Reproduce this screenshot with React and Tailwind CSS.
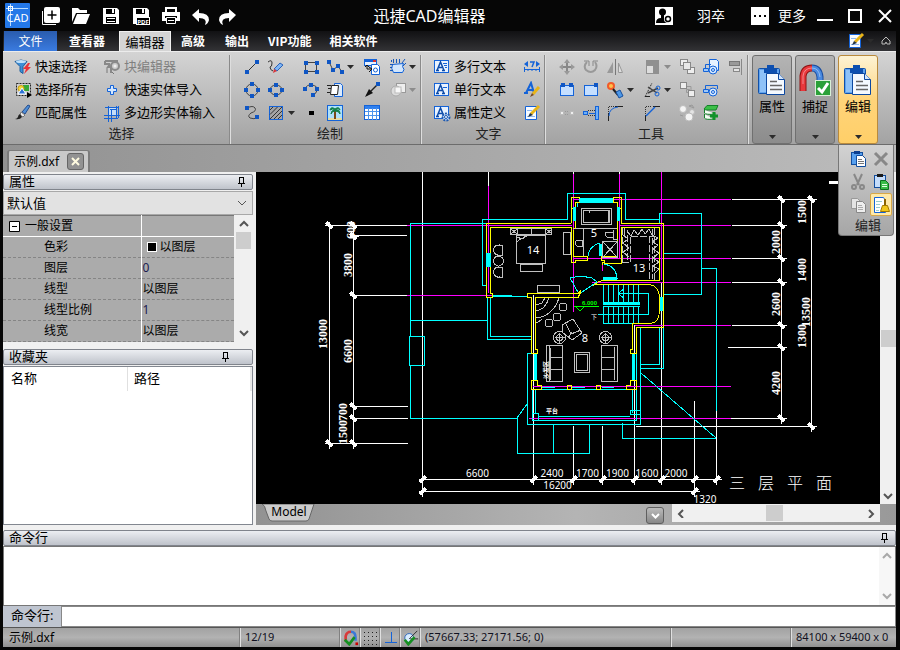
import React from "react";

const BLUE = "#1463d8";
const GRAY = "#c0c0c0";

function Icon({ size = 18, box = 18, children }) {
  return (
    <svg width={size} height={size} viewBox={`0 0 ${box} ${box}`} fill="none" className="shrink-0" aria-hidden="true">
      {children}
    </svg>
  );
}

function Dots({ at, r = 2, color = "#0f56c4" }) {
  return at.map(([x, y]) => (
    <rect key={`${x}-${y}`} x={x - r} y={y - r} width={r * 2} height={r * 2} fill={color} />
  ));
}

function LetterSheet({ children }) {
  return (
    <Icon>
      <rect x="1.500" y="2.500" width="14" height="12" fill="#e8f2ff" stroke={BLUE} />
      <path d="M4 12.500 7.500 4 11 12.500M5 9.500h4M3 12.500h3M9 12.500h3" stroke="#0b4aa8" strokeWidth="1.500" />
      {children}
    </Icon>
  );
}

const icons = {
  funnel: (
    <Icon>
      <path d="M1 3.500q6-3 12 0l-4 5v7l-3-2V8.500z" fill="#3c8fd8" stroke="#1c5c9c" />
      <ellipse cx="7" cy="3.500" rx="5" ry="1.500" fill="#bfe0fa" />
      <path d="m14 5-5 6h3l-2 5 7-7h-3l2-4z" fill="#e8333a" />
    </Icon>
  ),
  selectAll: (
    <Icon>
      <rect x="2.500" y="2.500" width="14" height="12" fill="#cfcfcf" stroke="#222" strokeDasharray="2 1" />
      <rect x="9" y="4" width="6" height="6" fill="#38a838" />
      <circle cx="7" cy="7.500" r="3" fill="#f4d83a" stroke="#c89c10" />
      <path d="m4 13 4-6 4 6z" fill="#2c72d8" stroke="#fff" />
      <path d="M13 11v6l5-3z" fill="#000" />
    </Icon>
  ),
  brush: (
    <Icon>
      <path d="m8 8 6-7 2 1-5 8z" fill="#4f8fd8" stroke="#234b8c" />
      <path d="m7 8 4 3-2 2-3-2z" fill="#eee" stroke="#777" />
      <path d="M6 10q-2 1-2 3-1 2-3 2 5 1 7-2z" fill="#222" />
    </Icon>
  ),
  blockEditor: (
    <Icon>
      <path d="M2 3h12v3M2 3v3h5M7 6 5 9h3v6" stroke="#888" strokeWidth="2" />
      <circle cx="12" cy="8" r="4" fill="#ccc" stroke="#8a8a8a" strokeWidth="2" />
      <circle cx="12" cy="8" r="1.500" fill="#eee" />
      <path d="M4 10v5M9 14l2 2" stroke="#777" />
    </Icon>
  ),
  plus: (
    <Icon>
      <path d="M7.500 4.500h3v3h3v3h-3v3h-3v-3h-3v-3h3z" fill="#d4e8ff" stroke={BLUE} />
    </Icon>
  ),
  polygonInput: (
    <Icon>
      <rect x="5.500" y="3.500" width="8" height="8" fill="#c4ddf8" />
      <path d="M2 3.500h14M5.500 2v16M13.500 2v13M1 11.500h16M8.500 5v13M15.500 2v12M1 14.500h14M7 5.500h7" stroke={BLUE} />
    </Icon>
  ),
  line: (
    <Icon>
      <path d="M4 14 14 4" stroke="#333" />
      <Dots at={[[4, 14], [14, 4]]} />
    </Icon>
  ),
  freehand: (
    <Icon>
      <path d="M1 4q4-3 4 1t-2 4q0 3 3 4" stroke="#333" />
      <path d="m7 11 6-6 3 2-6 6z" fill="#7db4f4" stroke="#2b62b8" />
      <path d="m7 11-1 4 4-2z" fill="#d8353a" />
    </Icon>
  ),
  rect: (
    <Icon>
      <rect x="3.500" y="4.500" width="11" height="9" stroke="#444" />
      <Dots at={[[4, 5], [15, 5], [4, 14], [15, 14]]} />
    </Icon>
  ),
  polyline: (
    <Icon>
      <path d="m3 4 4 8 5-4 4 6" stroke="#444" />
      <Dots at={[[3, 4], [7, 12], [12, 8], [16, 14]]} />
    </Icon>
  ),
  blockInsert: (
    <Icon>
      <rect x="1.500" y="1.500" width="12" height="6" fill="#e7f1ff" stroke={BLUE} />
      <path d="M2 3h8" stroke={BLUE} strokeWidth="2" />
      <path d="M10 3h3" stroke="#d83030" strokeWidth="2" />
      <path d="M8.500 6.500h6l2 2v8h-8z" fill="#fff" stroke={BLUE} />
      <circle cx="12.500" cy="12" r="2" stroke={BLUE} />
      <path d="M4 7v4h5M6 9l3 2-3 3M2 9l2-2 2 2" stroke="#111" />
    </Icon>
  ),
  region: (
    <Icon>
      <path d="M3.500 6.500q-2 4 1 8h9q3-3 0-6l1-3z" fill="#d2e6fc" stroke={BLUE} />
      <path d="M4.500 1v4M7.500 1v4M10.500 1v4M13 5l3-4M14 8l3-3M1 6.500h3M1 9.500h2M1 12.500h3M2.500 2v2" stroke="#1658b8" />
    </Icon>
  ),
  circle: (
    <Icon>
      <circle cx="9" cy="9" r="6" stroke="#444" />
      <Dots at={[[9, 3], [15, 9], [9, 15], [3, 9]]} />
    </Icon>
  ),
  ellipse: (
    <Icon>
      <ellipse cx="9" cy="9" rx="6" ry="5" stroke="#444" />
      <Dots at={[[9, 4], [15, 9], [9, 14], [3, 9]]} />
    </Icon>
  ),
  arc: (
    <Icon>
      <path d="M3 8q2-5 7-4 6 1 5 5 0 3-4 5" stroke="#444" />
      <Dots at={[[3, 8], [9, 4], [15, 8], [11, 14]]} />
    </Icon>
  ),
  xref: (
    <Icon>
      <path d="M8.500 2.500h6l2 2v11h-8z" fill="#dcebfc" stroke={BLUE} />
      <path d="M5.500 4.500h7l-1 9h-7z" fill="#fff" stroke="#222" />
      <path d="M1 4.500h4M2 7.500h3M1 11.500h3" stroke="#222" />
    </Icon>
  ),
  leader: (
    <Icon>
      <path d="m4 14 11-11" stroke="#222" strokeWidth="1.500" />
      <path d="m2 16 4-8 4 4z" fill="#111" />
      <Dots at={[[15, 3]]} />
    </Icon>
  ),
  wipeout: (
    <Icon>
      <rect x="7.500" y="2.500" width="9" height="9" fill="#eee" stroke="#999" />
      <circle cx="7" cy="10" r="5" fill="#ddd" stroke="#aaa" />
      <rect x="6" y="6" width="6" height="6" fill="#f8f8f8" stroke="#bbb" />
    </Icon>
  ),
  spline: (
    <Icon>
      <path d="M4 4q6-3 8 0t-4 5q-4 3-1 5 4 2 8-1" stroke="#444" />
      <Dots at={[[4, 4], [14, 13]]} />
    </Icon>
  ),
  hatch: (
    <Icon>
      <rect x="2.500" y="2.500" width="13" height="13" fill="#a4a4a4" stroke={BLUE} />
      <path d="m3 6 3-3M3 10.500 10.500 3M3 15 15 3M7 15l8-8M11 15l4-4" stroke="#333" />
    </Icon>
  ),
  point: (
    <Icon>
      <rect x="7" y="7" width="5" height="4" fill="#000" />
    </Icon>
  ),
  image: (
    <Icon>
      <rect x="1.500" y="1.500" width="15" height="15" fill="#aee0fa" stroke={BLUE} />
      <path d="M2 14h14v2H2z" fill="#e8dca0" />
      <path d="M9 6v9" stroke="#7a4a18" strokeWidth="2" />
      <path d="M9 6q-4 0-4 4 1-3 4-3 4 0 5 3 0-5-5-4 3-3 5 0-1-4-5-1-4-3-5 1 3-2 5 0z" fill="#128048" stroke="#128048" />
    </Icon>
  ),
  table: (
    <Icon>
      <rect x="1.500" y="1.500" width="15" height="14" fill="#fff" stroke={BLUE} />
      <path d="M2 3.500h14" stroke="#3080ee" strokeWidth="3" />
      <path d="M2 7.500h14M2 11.500h14M5.500 4v12M9.500 4v12M13.500 4v12" stroke="#4c94ec" />
    </Icon>
  ),
  mtext: (
    <LetterSheet>
      <path d="M10 5.500h4M11 7.500h3M12 9.500h2" stroke={BLUE} />
    </LetterSheet>
  ),
  stext: (
    <LetterSheet>
      <path d="M10 6.500h4" stroke={BLUE} />
    </LetterSheet>
  ),
  attdef: (
    <LetterSheet>
      <circle cx="13" cy="13" r="3.500" fill="#cfe4fc" stroke="#1c58b0" strokeWidth="2" strokeDasharray="2 1" />
      <circle cx="13" cy="13" r="1.500" fill="#fff" stroke="#1c58b0" />
    </LetterSheet>
  ),
  dimension: (
    <Icon>
      <path d="M1 11.500h16M1.500 9v5M16.500 9v5M5 11v2M9 11v2M13 11v2" stroke={BLUE} />
      <path d="m1 6 4-3v6zM17 6l-4-3v6z" fill={BLUE} />
      <path d="M7 4h4L9 9" stroke={BLUE} strokeWidth="1.500" />
    </Icon>
  ),
  textStyle: (
    <Icon>
      <path d="m3 12 5-10 3 10M5 9h5M1 12h4" stroke={BLUE} strokeWidth="2" />
      <path d="m10 13 6-7" stroke="#e8b418" strokeWidth="3" />
      <path d="m7 16 2-4 2 2z" fill="#7b4a1c" />
    </Icon>
  ),
  sheetEdit: (
    <Icon>
      <path d="M2.500 2.500h11v13h-11z" fill="#f7fbff" stroke={BLUE} />
      <path d="M4 6.500h5M4 12.500h8" stroke="#8eb8f0" />
      <path d="m8 10 8-8" stroke="#e8b418" strokeWidth="3" />
      <path d="m5 13 2-4 3 2z" fill="#234" />
    </Icon>
  ),
  move: (
    <Icon>
      <path d="M9 3v12M3 9h12" stroke="#888" strokeWidth="2" />
      <path d="m9 1 3 4H6zM9 17l3-4H6zM1 9l4-3v6zM17 9l-4-3v6z" fill="#999" />
    </Icon>
  ),
  rotate: (
    <Icon>
      <path d="M5 4q-4 4-1 8 5 4 9 0 3-4 0-8" stroke="#999" strokeWidth="2" />
      <path d="M2 3h5v5M11 8V3h5" stroke="#888" />
    </Icon>
  ),
  mirror: (
    <Icon>
      <path d="M9.500 1v16" stroke="#777" />
      <path d="M7 4v11H1z" fill="#999" />
      <path d="M12.500 5v9.500h4z" fill="#ddd" stroke="#999" />
    </Icon>
  ),
  scale: (
    <Icon>
      <rect x="3" y="2" width="13" height="14" fill="#909090" />
      <rect x="3" y="7" width="8" height="9" fill="#ddd" />
      <rect x="3.500" y="7.500" width="7" height="8" stroke="#444" strokeDasharray="1 1" />
    </Icon>
  ),
  orderFront: (
    <Icon>
      <rect x="2.500" y="1.500" width="7" height="6" fill="#eee" stroke="#888" />
      <rect x="9.500" y="9.500" width="7" height="6" fill="#eee" stroke="#888" />
      <rect x="5.500" y="4.500" width="7" height="7" fill="#e8e8e8" stroke="#888" />
    </Icon>
  ),
  blockA: (
    <Icon>
      <path d="M7.500 1.500h7l2 2v9h-9z" fill="#e5f1ff" stroke={BLUE} />
      <path d="M3.500 10V6.500H9" stroke={BLUE} />
      <path d="M1.500 10.500h5v3h-5z" stroke={BLUE} fill="#9dc8fa" />
      <circle cx="11" cy="12" r="4" fill="#d6e9ff" stroke={BLUE} />
      <circle cx="11" cy="12" r="1.500" stroke={BLUE} />
    </Icon>
  ),
  align: (
    <Icon>
      <path d="M15.500 1v16" stroke="#888" />
      <rect x="3.500" y="3.500" width="10" height="4" fill="#999" stroke="#777" />
      <rect x="7.500" y="10.500" width="6" height="3" fill="#e4e4e4" stroke="#888" />
    </Icon>
  ),
  breakA: (
    <Icon>
      <rect x="2.500" y="4.500" width="13" height="10" fill="#c5dfff" stroke={BLUE} />
      <Dots at={[[5, 4], [13, 4]]} />
    </Icon>
  ),
  breakB: (
    <Icon>
      <rect x="2.500" y="4.500" width="13" height="10" fill="#c5dfff" stroke={BLUE} />
      <Dots at={[[14, 4]]} />
    </Icon>
  ),
  explode: (
    <Icon>
      <circle cx="5" cy="5" r="4" fill="#f25a28" />
      <circle cx="5" cy="5" r="2" fill="#ffc04a" />
      <path d="m7 8 5 6" stroke="#222" strokeWidth="2" />
      <path d="m10 11 4-2 3 6-4 2z" fill="#4d98e8" stroke="#174f9e" />
    </Icon>
  ),
  trim: (
    <Icon>
      <path d="m2 16 7-14" stroke="#333" strokeDasharray="2 1" />
      <path d="m5 6 9 6M5 12l10-5" stroke="#444" strokeWidth="1.500" />
      <circle cx="15" cy="7" r="2" stroke={BLUE} />
      <circle cx="14" cy="13" r="2" stroke={BLUE} />
      <path d="M2 15.500h5" stroke="#222" />
    </Icon>
  ),
  orderBack: (
    <Icon>
      <path d="M8.500 8.500h3v3h-3zM9 5.500h4V9" stroke="#999" />
      <rect x="2.500" y="1.500" width="6" height="6" fill="#eee" stroke="#888" />
      <rect x="10.500" y="9.500" width="6" height="6" fill="#eee" stroke="#888" />
    </Icon>
  ),
  blockB: (
    <Icon>
      <path d="M3.500 9V4.500h12V8" stroke={BLUE} />
      <path d="M1.500 8.500h5v3h-5z" stroke={BLUE} fill="#9dc8fa" />
      <circle cx="11" cy="11" r="4" fill="#d6e9ff" stroke={BLUE} />
      <circle cx="11" cy="11" r="1.500" stroke={BLUE} />
    </Icon>
  ),
  join: (
    <Icon>
      <rect x="2.500" y="7.500" width="3" height="3" fill="#eee" stroke="#bbb" />
      <rect x="12.500" y="7.500" width="3" height="3" fill="#eee" stroke="#bbb" />
      <path d="M7 7.500h4M7 10.500h4" stroke="#999" strokeDasharray="1 1" />
    </Icon>
  ),
  extend: (
    <Icon>
      <rect x="13.500" y="2.500" width="3" height="13" fill="#6fb0f8" stroke={BLUE} />
      <rect x="1.500" y="7.500" width="4" height="3" fill="#6fb0f8" stroke={BLUE} />
      <path d="M6 6.500h7M6 11.500h7" stroke="#333" strokeDasharray="1 1" />
      <path d="M7 9.500h6" stroke={BLUE} />
    </Icon>
  ),
  fillet: (
    <Icon>
      <path d="M2.500 17V9M9 2.500h8" stroke="#222" />
      <path d="M2.500 8V2.500H8" stroke="#333" strokeDasharray="1 1" />
      <path d="M3 12q0-8 9-9" stroke={BLUE} />
    </Icon>
  ),
  chamfer: (
    <Icon>
      <path d="M2.500 17v-6M10 2.500h7" stroke="#222" />
      <path d="M2.500 10V2.500H9" stroke="#333" strokeDasharray="1 1" />
      <path d="m3 12 9-9" stroke={BLUE} strokeWidth="1.500" />
    </Icon>
  ),
  group: (
    <Icon>
      <circle cx="5" cy="5" r="3.500" fill="#f4f4f4" stroke="#bbb" />
      <circle cx="14" cy="8" r="2.500" fill="#e4e4e4" stroke="#bbb" />
      <circle cx="11" cy="13" r="4" fill="#f4f4f4" stroke="#bbb" />
      <path d="m11 2 3-1 2 3zM2 11l3 1" stroke="#999" />
    </Icon>
  ),
  addLayer: (
    <Icon>
      <path d="M2 5 5 1.500h11L14 6H3z" fill="#3cbf48" stroke="#14802a" />
      <path d="M2.500 6v3q1 2 11 1M2.500 10v4q1 2 9 1" stroke="#14802a" fill="#f4fff4" />
      <path d="M12 8v8M8 12h8" stroke="#12922a" strokeWidth="3" />
    </Icon>
  ),
  paste: (
    <Icon>
      <rect x="2.500" y="2.500" width="11" height="12" fill="#58a0ee" stroke="#124e9e" />
      <rect x="5" y="1" width="6" height="3" fill="#0b3f90" />
      <path d="M7.500 5.500h6l3 3v8h-9z" fill="#fff" stroke="#124e9e" />
      <path d="M9 9.500h4M9 11.500h6M9 13.500h6" stroke="#777" />
    </Icon>
  ),
  remove: (
    <Icon>
      <path d="m3 3 12 12M15 3 3 15" stroke="#888" strokeWidth="3" />
    </Icon>
  ),
  cut: (
    <Icon>
      <path d="m5 1 5 11M13 1 8 12" stroke="#888" strokeWidth="2" />
      <circle cx="5" cy="14" r="2" stroke="#888" strokeWidth="2" />
      <circle cx="13" cy="14" r="2" stroke="#888" strokeWidth="2" />
    </Icon>
  ),
  pasteBlock: (
    <Icon>
      <rect x="2.500" y="2.500" width="11" height="12" fill="#c5ddfb" stroke="#124e9e" />
      <rect x="5" y="1" width="6" height="3" fill="#1a1a1a" />
      <path d="M8.500 7.500h5l3 3v6h-8z" fill="#39bd48" stroke="#0f701f" />
      <path d="M10 11.500h5M10 13.500h5" stroke="#dfffdf" />
    </Icon>
  ),
  copy: (
    <Icon>
      <path d="M2.500 2.500h6l3 3v7h-9z" fill="#e4e4e4" stroke="#999" />
      <path d="M7.500 5.500h6l3 3v8h-9z" fill="#eee" stroke="#888" />
      <path d="M9 9.500h4M9 11.500h5M9 13.500h5" stroke="#aaa" />
    </Icon>
  ),
  clean: (
    <Icon>
      <path d="M2.500 1.500h9l2 3v12h-11z" fill="#fff" stroke={BLUE} />
      <path d="M4 5.500h6M4 8.500h4M4 11.500h4M4 14.500h3" stroke="#9cc" />
      <path d="M13 3v7" stroke="#8c6400" strokeWidth="2" />
      <path d="M10.500 9.500h5l2 6h-9z" fill="#f1c71c" stroke="#a37a00" />
    </Icon>
  ),
};

function Arrow({ muted }) {
  return (
    <svg width="7" height="4" viewBox="0 0 7 4" className="shrink-0" aria-hidden="true">
      <path d="M0 0h7L3.500 4z" fill={muted ? "#8c8c8c" : "#2b2b2b"} />
    </svg>
  );
}

function Tool({ icon, label, arrow, muted }) {
  return (
    <button type="button" aria-label={label} className="flex h-[23px] items-center">
      <span className="flex w-6 justify-center">{icons[icon]}</span>
      {arrow && <Arrow muted={muted} />}
    </button>
  );
}

function TextTool({ icon, label, muted }) {
  return (
    <button type="button" className={`flex h-[23px] items-center gap-[3px] whitespace-nowrap text-[13px] ${muted ? "text-[#808080]" : "text-black"}`}>
      {icons[icon]}
      {label}
    </button>
  );
}

function Group({ title, className, children }) {
  return (
    <section aria-label={title} className={`flex shrink-0 flex-col border-r border-r-[#8a8a8a] shadow-[1px_0_0_#dedede] ${className}`}>
      {children}
      <h2 className="h-5 text-center text-[13px] leading-[18px] text-[#222]">{title}</h2>
    </section>
  );
}

function Clipboard() {
  return (
    <Icon size={32} box={32}>
      <rect x="2.500" y="4.500" width="21" height="25" rx="1" fill="#5fa3ef" stroke="#1150a8" />
      <rect x="4" y="6" width="8" height="22" fill="#8fc2f8" />
      <path d="M8 5h3V1h7v4h3v4H8z" fill="#0d4fb0" />
      <path d="M10.500 9.500h12l6 6v15h-18z" fill="#f4f9ff" stroke="#0d48a0" />
      <path d="M22.500 9.500v6h6" fill="#d4e6fb" stroke="#0d48a0" />
      <path d="M14 17.500h7M14 21.500h12M14 25.500h12" stroke="#666" strokeWidth="1.500" />
    </Icon>
  );
}

function Magnet() {
  return (
    <Icon size={32} box={32}>
      <path d="M4 27V12Q5 4 13 4" stroke="#8d1414" strokeWidth="7" />
      <path d="M4 27V12Q5 4 13 4" stroke="#e8383c" strokeWidth="5" />
      <path d="M13 4q7 0 8 9v8" stroke="#1b4ea0" strokeWidth="7" />
      <path d="M13 4q7 0 8 9v8" stroke="#4a8ae0" strokeWidth="5" />
      <path d="M4 20V12Q5 4 13 4q7 0 8 9" stroke="#fff" strokeOpacity=".4" />
      <rect x="16.500" y="16.500" width="15" height="15" fill="#2aa038" stroke="#d8f0d8" />
      <path d="m19 24 4 4 6-9" stroke="#fff" strokeWidth="3" />
    </Icon>
  );
}

function BigButton({ label, active, children }) {
  return (
    <button
      type="button"
      className={`flex w-10 shrink-0 flex-col items-center rounded-[3px] border pt-2 pb-1 text-[13px] text-black ${
        active ? "border-[#b98a3c] bg-linear-to-b from-[#fdf3d4] via-[#ffd47a] to-[#ffcf68]" : "border-[#707070] bg-linear-to-b from-[#b4b4b4] to-[#8c8c8c]"
      }`}
    >
      {children}
      <span className="leading-5">{label}</span>
      <span className="mt-auto">
        <Arrow />
      </span>
    </button>
  );
}

function Chevron({ dir }) {
  const paths = { up: "m1 6 4-4 4 4", down: "m1 3 4 4 4-4", left: "M7 1 3 5l4 4", right: "m3 1 4 4-4 4" };
  return (
    <svg width="10" height="9" viewBox="0 0 10 9" fill="none" className="shrink-0" aria-hidden="true">
      <path d={paths[dir]} stroke="#555" strokeWidth="2" />
    </svg>
  );
}

function Pin() {
  return (
    <svg width="9" height="10" viewBox="0 0 9 10" fill="none" aria-hidden="true">
      <path d="M2.500 6V.5h4V6M6 1v5M1 6.500h7M4.500 7v3" stroke="#000" shapeRendering="crispEdges" />
    </svg>
  );
}

function PanelHeader({ title, pinClass = "pr-1.5" }) {
  return (
    <div className={`flex h-4 items-center justify-between rounded-[2px] border border-[#80848c] bg-linear-to-b from-[#eceef2] to-[#bfc3cb] pl-[5px] ${pinClass}`}>
      <h2 className="pb-0.5 text-[13px] leading-[14px] text-black">{title}</h2>
      <button type="button" aria-label={`固定${title}`}>
        <Pin />
      </button>
    </div>
  );
}

const drawTools = [
  ["line", "直线"], ["freehand", "徒手画"], ["rect", "矩形"], ["polyline", "多段线", true], ["blockInsert", "插入块"], ["region", "云线", true],
  ["circle", "圆"], ["ellipse", "椭圆"], ["arc", "圆弧"], ["xref", "外部参照"], ["leader", "引线"], ["wipeout", "遮罩", true, true],
  ["spline", "样条"], ["hatch", "填充", true], ["point", "点"], ["image", "图像"], ["table", "表格"],
];

const editTools = [
  ["move", "移动"], ["rotate", "旋转"], ["mirror", "镜像"], ["scale", "缩放", true, true], ["orderFront", "前置"], ["blockA", "创建块"], ["align", "对齐"],
  ["breakA", "打断"], ["breakB", "打断于点"], ["explode", "分解", true], ["trim", "修剪", true], ["orderBack", "后置"], ["blockB", "编辑块"], null,
  ["join", "合并"], ["extend", "延伸"], ["fillet", "圆角"], ["chamfer", "倒角"], ["group", "编组"], ["addLayer", "添加图层"],
];

function Toolset({ items, className }) {
  return (
    <div className={`grid ${className}`}>
      {items.map((t, i) => (t ? <Tool key={t[0]} icon={t[0]} label={t[1]} arrow={t[2]} muted={t[3]} /> : <span key={i} />))}
    </div>
  );
}

function TitleBar() {
  return (
    <header className="flex h-[31px] items-center text-white">
      <svg width="25" height="25" viewBox="0 0 25 25" className="mr-3 ml-[5px] shrink-0" role="img" aria-label="CAD">
        <rect width="25" height="25" rx="1" fill="#2478e8" />
        <path d="M5.500 1v22M1 5.500h22" stroke="#b8dcff" />
        <rect x="3.500" y="3.500" width="4" height="4" fill="none" stroke="#fff" />
        <text x="12.500" y="19" textAnchor="middle" fontSize="11" fill="#fff" fontFamily="Noto Sans">CAD</text>
      </svg>
      <div className="flex shrink-0 items-center gap-3">
        <button type="button" aria-label="新建">
          <Icon>
            <path d="M.500 4v13.500H14" stroke="#fff" />
            <rect x="2" y="0" width="16" height="16" rx="2" fill="#fff" />
            <path d="M10 3.500v9M5.500 8h9" stroke="#000" strokeWidth="1.500" />
          </Icon>
        </button>
        <button type="button" aria-label="打开">
          <Icon>
            <path d="M0 1h6l2 2h7v3H4L0 15z" fill="#fff" />
            <path d="M5 7h13l-4 10H1z" fill="#fff" />
          </Icon>
        </button>
        <button type="button" aria-label="保存">
          <Icon>
            <path d="M1 1h14l2 2v14H1z" fill="#fff" />
            <path d="M4 2h9v5H4zM4 10h10v6H4z" fill="#000" />
            <path d="M10 2h2v4h-2zM5 11h8v1H5zM5 14h8v1H5z" fill="#fff" />
          </Icon>
        </button>
        <button type="button" aria-label="保存为 PDF">
          <Icon>
            <path d="M1 1h14l2 2v7H4v7H1z" fill="#fff" />
            <path d="M4 2h9v5H4z" fill="#000" />
            <path d="M10 2h2v4h-2z" fill="#fff" />
            <rect x="4.500" y="10.500" width="13" height="7" fill="#000" stroke="#fff" />
            <text x="11" y="16.500" textAnchor="middle" fontSize="6" fontWeight="700" fill="#fff" fontFamily="Noto Sans">PDF</text>
          </Icon>
        </button>
        <button type="button" aria-label="打印">
          <Icon>
            <path d="M4 5V1h10v4" stroke="#fff" strokeWidth="2" />
            <path d="M0 5h18v9H0z" fill="#fff" />
            <path d="M3 9h12v2H3z" fill="#000" />
            <path d="M4.500 10.500h9v6h-9z" fill="#000" stroke="#fff" />
            <path d="M6 13.500h6" stroke="#fff" />
          </Icon>
        </button>
        <button type="button" aria-label="撤销">
          <Icon>
            <path d="M0 8 7 2v4q10 0 10 7-1 4-4 5 3-7-6-7v4z" fill="#fff" />
          </Icon>
        </button>
        <button type="button" aria-label="重做" className="-ml-1">
          <Icon>
            <path d="m18 8-7-6v4Q1 6 1 13q1 4 4 5-3-7 6-7v4z" fill="#fff" />
          </Icon>
        </button>
      </div>
      <h1 className="flex-1 pr-8 text-center text-base whitespace-nowrap">迅捷CAD编辑器</h1>
      <div className="flex shrink-0 items-center pr-1.5 text-sm">
        <button type="button" className="flex items-center gap-6">
          <Icon>
            <rect width="18" height="18" fill="#fff" />
            <circle cx="7.500" cy="5" r="3.500" fill="#000" />
            <path d="M1 16q0-5 5-5V8h3v3l3 2v3z" fill="#000" />
            <circle cx="13" cy="12" r="4" fill="#fff" />
            <circle cx="13" cy="12" r="2.500" stroke="#000" strokeWidth="1.500" />
          </Icon>
          羽卒
        </button>
        <button type="button" className="ml-[26px] flex items-center gap-[9px]">
          <Icon>
            <rect width="18" height="18" fill="#fff" />
            <path d="M3 8h2v2H3zM8 8h2v2H8zM13 8h2v2h-2z" fill="#000" />
          </Icon>
          更多
        </button>
        <button type="button" aria-label="最小化" className="ml-2.5">
          <Icon><path d="M1 13h16" stroke="#fff" strokeWidth="2" /></Icon>
        </button>
        <button type="button" aria-label="最大化" className="ml-3">
          <Icon><rect x="3" y="3" width="12" height="12" stroke="#fff" strokeWidth="2" /></Icon>
        </button>
        <button type="button" aria-label="关闭" className="ml-3">
          <Icon><path d="m3 3 12 12M15 3 3 15" stroke="#fff" strokeWidth="2" /></Icon>
        </button>
      </div>
    </header>
  );
}

function MenuBar() {
  return (
    <nav className="flex h-5 bg-linear-to-b from-[#111113] to-[#333336] pl-px font-['Noto_Sans_CJK_SC',sans-serif] text-xs font-bold text-white">
      <button type="button" className="w-[53px] bg-linear-to-b from-[#2a5cae] to-[#3a7be0] font-normal">文件</button>
      <button type="button" className="px-3">查看器</button>
      <button type="button" className="ml-0.5 w-[52px] border-x border-t border-[#f0f0f0] bg-[#d4d4d4] text-[13px] leading-[17px] font-normal text-black">编辑器</button>
      <button type="button" className="px-2.5">高级</button>
      <button type="button" className="px-2.5">输出</button>
      <button type="button" className="px-[9px]">VIP功能</button>
      <button type="button" className="px-[9px]">相关软件</button>
      <div className="ml-auto flex items-center gap-1 pr-0.5">
        <button type="button" aria-label="界面样式" className="flex items-center gap-0.5">
          {icons.sheetEdit}
          <Arrow />
        </button>
        <button type="button" aria-label="折叠功能区">
          <svg width="16" height="12" viewBox="0 0 16 12" fill="none" aria-hidden="true">
            <path d="m4 6 4-4 4 4v3H9L8 7 7 9H4z" stroke="#bbb" />
          </svg>
        </button>
      </div>
    </nav>
  );
}

function Ribbon() {
  return (
    <div className="flex overflow-hidden border-t border-b border-t-[#ececec] border-b-[#6c6c6c] bg-linear-to-b from-[#d4d4d4] to-[#a3a3a3] pt-[3px]">
      <Group title="选择" className="w-[227px] pl-[11px]">
        <div className="grid grid-cols-[89px_1fr]">
          <TextTool icon="funnel" label="快速选择" />
          <TextTool icon="blockEditor" label="块编辑器" muted />
          <TextTool icon="selectAll" label="选择所有" />
          <TextTool icon="plus" label="快速实体导入" />
          <TextTool icon="brush" label="匹配属性" />
          <TextTool icon="polygonInput" label="多边形实体输入" />
        </div>
      </Group>
      <Group title="绘制" className="w-[191px] pl-2.5">
        <Toolset items={drawTools} className="grid-cols-[24px_35px_24px_37px_26px_30px]" />
      </Group>
      <Group title="文字" className="w-[124px] pl-3">
        <div className="grid grid-cols-[87px_24px]">
          <TextTool icon="mtext" label="多行文本" />
          <Tool icon="dimension" label="查找替换" />
          <TextTool icon="stext" label="单行文本" />
          <Tool icon="textStyle" label="文字样式" />
          <TextTool icon="attdef" label="属性定义" />
          <Tool icon="sheetEdit" label="编辑文字" />
        </div>
      </Group>
      <Group title="工具" className="w-[203px] pl-2.5">
        <Toolset items={editTools} className="grid-cols-[24px_24px_37px_35px_24px_24px_24px]" />
      </Group>
      <div className="flex gap-[3px] pl-1">
        <BigButton label="属性"><Clipboard /></BigButton>
        <BigButton label="捕捉"><Magnet /></BigButton>
        <BigButton label="编辑" active><Clipboard /></BigButton>
      </div>
    </div>
  );
}

function EditMenu() {
  return (
    <div className="absolute top-0 right-0.5 z-10 w-14 rounded-b-[4px] border-r border-b border-l border-[#777] bg-linear-to-b from-[#d2d2d2] to-[#a6a6a6]">
      <div className="grid grid-cols-2 justify-items-center pt-0.5 pr-px pl-[7px]">
        {[["paste", "粘贴"], ["remove", "删除"], ["cut", "剪切"], ["pasteBlock", "粘贴为块"], ["copy", "复制"], ["clean", "清理"]].map(([icon, label]) => (
          <button
            key={icon}
            type="button"
            aria-label={label}
            className={`flex h-[23px] w-[22px] items-center justify-center rounded-[2px] border ${icon === "clean" ? "border-[#d8a848] bg-[#ffe9a8]" : "border-transparent"}`}
          >
            {icons[icon]}
          </button>
        ))}
      </div>
      <p className="h-[19px] pl-1 text-center text-[13px] leading-[19px] text-[#222]">编辑</p>
    </div>
  );
}

const properties = [
  ["色彩", "以图层"],
  ["图层", "0"],
  ["线型", "以图层"],
  ["线型比例", "1"],
  ["线宽", "以图层"],
];

function SidePanels() {
  return (
    <aside className="flex w-[253px] shrink-0 flex-col bg-[#f0f0f0] pt-0.5 pr-[3px]">
      <PanelHeader title="属性" />
      <label className="relative mt-px flex">
        <span className="sr-only">属性对象</span>
        <select className="h-6 w-full appearance-none border border-[#a8a8a8] bg-[#e2e2e2] px-[3px] text-[13px] leading-[20px] text-black">
          <option>默认值</option>
        </select>
        <svg width="10" height="6" viewBox="0 0 10 6" fill="none" className="pointer-events-none absolute top-[9px] right-1.5" aria-hidden="true">
          <path d="m1 1 4 4 4-4" stroke="#555" />
        </svg>
      </label>
      <div className="flex">
        <table className="flex-1 table-fixed border-collapse bg-[#ababab] text-left text-xs text-black">
          <colgroup>
            <col className="w-[138px]" />
            <col />
          </colgroup>
          <tbody>
            <tr className="h-[21px] border-t border-b border-t-[#777] border-b-white">
              <th scope="row" className="border-r border-r-white p-0 pl-1.5 font-normal">
                <span className="flex items-center gap-[5px]">
                  <svg width="11" height="11" viewBox="0 0 11 11" aria-hidden="true">
                    <path d="M.5.5h10v10H.5zM3 5.500h5" fill="#fff" stroke="#000" />
                  </svg>
                  一般设置
                </span>
              </th>
              <td />
            </tr>
            {properties.map(([name, value], i) => (
              <tr key={name} className="h-[21px] border-b border-dashed border-b-[#858585]">
                <th scope="row" className="border-r border-solid border-r-white p-0 pl-[41px] font-normal">{name}</th>
                <td className={`p-0 pl-px ${value.length === 1 ? "text-[#1c1c50]" : ""}`}>
                  <span className="flex items-center gap-[3px]">
                    {i === 0 && <span className="ml-1 size-2.5 border border-white bg-black" />}
                    {value}
                  </span>
                </td>
              </tr>
            ))}
          </tbody>
        </table>
        <div className="flex w-[19px] flex-col items-center bg-[#f0f0f0] py-[5px]">
          <Chevron dir="up" />
          <div className="mt-[3px] h-[17px] w-[15px] bg-[#cdcdcd]" />
          <span className="mt-auto"><Chevron dir="down" /></span>
        </div>
      </div>
      <div className="mt-[7px]">
        <PanelHeader title="收藏夹" pinClass="pr-[22px]" />
      </div>
      <div className="mt-px flex-1 border border-[#828790] bg-white">
        <table className="w-full table-fixed border-collapse text-left text-[13px] text-black">
          <thead>
            <tr className="h-6">
              <th scope="col" className="border-r border-[#e0e0e0] p-0 pl-[7px] font-normal">名称</th>
              <th scope="col" className="border-r-2 border-[#e8e8e8] p-0 pl-1.5 font-normal">路径</th>
            </tr>
          </thead>
        </table>
      </div>
    </aside>
  );
}

function Tick({ x, y }) {
  return (
    <g>
      <path d={`M${x - 4} ${y}h9M${x} ${y - 4}v9`} stroke="#fff" />
      <path d={`M${x - 3} ${y + 3}l6-6`} stroke="#fff" strokeWidth="3" />
    </g>
  );
}

function TickDown({ x, y }) {
  return (
    <g>
      <path d={`M${x - 4} ${y}h9M${x} ${y - 4}v9`} stroke="#fff" />
      <path d={`M${x - 3} ${y - 3}l6 6`} stroke="#fff" strokeWidth="3" />
    </g>
  );
}

const bottomDims = [["6600", 477.5, 477], ["2400", 552, 477], ["1700", 587.5, 477], ["1900", 617.5, 477], ["1600", 647, 477], ["2000", 676, 477], ["16200", 557.5, 489], ["1320", 705, 503]];
const sideDims = [["600", 351, 230], ["3800", 348, 265], ["13000", 323, 334], ["6600", 348, 351], ["700", 343, 412], ["1500", 343, 432], ["1500", 802, 212], ["2000", 776, 242], ["1400", 802, 270], ["2600", 776, 304], ["13500", 806, 312], ["1300", 802, 336], ["4200", 776, 383]];
const steps = [603.5, 608.5, 613.5, 618.5, 623.5, 628.5, 633.5, 638.5];

function FloorPlan() {
  return (
    <svg viewBox="256 172 624 332" preserveAspectRatio="xMidYMid slice" className="min-h-0 w-full flex-1 bg-black" fill="none" role="img" aria-label="三层平面" shapeRendering="crispEdges">
      <g stroke="#fff">
        <path d="M422.500 172V492M329.500 224V444M353.500 224V444M325 225.500H407M353 235.500H407M350 295.500H407M350 406.500H408M350 418.500H408M325 443.500H408" />
        <path d="M488.500 172V186M573.500 172V174M619.500 172V174" />
        <path d="M732 199.500H815M732 225.500H785M732 258.500H785M732 282.500H785M732 325.500H785M728 347.500H785M731 418.500H785M636 426.500H815M781.500 199V420M811.500 199V428" />
        <path d="M533.500 295V484M573.500 426V484M602.500 426V484M634.500 325V484M661.500 282V484M694.500 401V495M716.500 411V484M422 479.500H720M422 491.500H695" />
      </g>
      <g stroke="#f0f">
        <path d="M407 225.500H572M620 225.500H731M407 295.500H492M488.500 186V293M573.500 174V312M619.500 174V258M661.500 172V280M573 199.500H731M573 258.500H731M592 282.500H731M635 325.500H731M533 386.500H731M529 418.500H731M602.500 262V271" />
      </g>
      <g stroke="#0ff">
        <path d="M486 223.500H410.500V336M410.500 366V418.500H517.500V453.500H589.500V424M553.500 424V453M517 418l10-14M410 320.500H488M409.500 336.500h15v29h-15z" />
        <path d="M487 285.500H482.500V219.500H567.500V193.500H625.500V219.500H660M659.500 223V213.500H701.500V294.500H663M663 253.500H701M701 268.500H716.500V411" />
        <path d="M487.500 297V339.500H532M490.500 297V336.500H532M492 296.500H528M492 295.500H512M640.500 327V424.500H527.500V353.500H532M659.500 327V364.500H641M663.500 327V368.500H641M622.500 423V438.500H716M641 373 716 438" />
        <path d="M535 389.500H633M538 416.500H630M532 420.500H637M532.500 389V420M535.500 389V413M636.500 353V420M632.500 389V413M541 387.500H555M571 387.500H585M602 387.500H614M532 413.500h6v7M630 410.500h10v4h-10z" />
        <path d="M579 202.500H613M579 198.500H613M577 203v4M617 203v4" />
        <path d="M618 293.500H648.500V314.500H598M618 293.500l5-4M618 293.500l5 4M603 284.500H640M603 306.500H640M603 323.500H636" />
        {steps.map((x) => (
          <path key={x} d={`M${x} 285V302M${x} 307V323`} />
        ))}
        <path d="M588 256q1-10 12-13M604 264q12 2 13 14H604M570 278l11-2 11 2 5 4-18 12zM570 278l9 16" />
      </g>
      <g stroke="#ff0">
        <path d="M571 223.500H486.500V297.500H492.500V293.500H490.500V227.500H571.500V262.500H575.500V260.500H587.500V256.500H573.500V230" />
        <path d="M571.500 197.500h8v5h-4v6h-4zM613.500 197.500h8v11h-4v-6h-4zM571.500 208V223M575.500 221V228H573M617.500 221V256.500H601.500V260.500H604V263H621.500V227.500H659.500V280.500H602.500M621.500 208V223.500H663.500V327.500H636.500" />
        <path d="M604 262.500H602.500V265M604.500 277V280M593 286l5-4 5-1.500M594 284.500H650q9 2 9.500 13V312q-1 11-9 11.500H632.500V350M636.500 327V353.500H630.500V349.500H632M527.500 293.500H578l2-2v2l-2 4H535.500V349.500H537.500V353.500H531.500V297.500H527.500z" />
        <path d="M531.500 380.500h6v5h4v4h-10zM636.500 380.500h-6v5h-4v4h10zM567.500 385.500h4v4h-4zM596.500 385.500h4v4h-4zM535 297.500H578" />
      </g>
      <g stroke="#0ff" strokeWidth="3">
        <path d="M579 200.500H613M574.500 207V221M618.500 207V221M603 303.500H640M535.500 354V380M633.500 354V380M661.500 297V311M600.500 244V256M603 278.500H617" />
        <path d="M488.500 253V267" strokeWidth="5" />
      </g>
      <g stroke={GRAY}>
        <path d="M516.500 235.500h29v28h-29zM520.500 264.500h22v7h-22zM510.500 228.500h7v6h-7zM517 228.500h28v6h-28zM531 228v7M545.500 228.500h6v6h-6zM563.500 232.500h7v22h-7zM537.500 285.500h22v7h-22zM516 242l10-6M517 237l5 2 5-3" />
        <path d="M502.500 245v10h-5q-4-1-4-5t4-5zM502.500 267v10h-5q-4-1-4-5t4-5zM499 246v-2M499 276v2" />
        <path d="M511 229l6 5M517 229l-6 5M546 229l6 5M552 229l-6 5" />
        <circle cx="498.500" cy="261" r="5" />
        <path d="M581.500 208.500h30v16h-30zM583.500 210.500h26v12h-26zM608 211v11M589 210v3M583.500 228V256M575 228.500H617M602.500 241.500h15v16h-15zM603 242l14 15M617 242l-14 15M613.500 230v9h4M613 232h-6q-4 2 0 5h6" />
        <path d="M577 240h5v6h-5q-3-3 0-6z" />
        <path d="M622 228V262M630.500 236.500V262H622M630.500 236.500H649.500V280M654.500 228V280M650 236h4M624 228v8M627 260v-30M652.500 229v50" strokeDasharray="7 2" />
        <path d="M627 231l4 5 3-6 4 5 4-6 3 5 4-5 3 6 6 3-6 4 6 3-5 4 6 4-6 5 6 4-6 4 6 3-5 5M622 234l6 5-5 4 6 5-6 4 6 5" />
        <path d="M536 311q9-1 13-13M536 318q17-2 23-20M536 305l6-2 3-5M536 323q4-2 6-4" />
        <circle cx="563" cy="307" r="4" />
        <circle cx="557" cy="317" r="4" />
        <circle cx="549" cy="323" r="4" />
        <path d="m562 325 11-6 9 14-10 7-9-7zM566 324l5 10 10-4M568 338l4-6" />
        {[559.5, 605.5].map((x) => (
          <g key={x}>
            <circle cx={x} cy="337.500" r="6" />
            <circle cx={x} cy="337.500" r="3" />
            <path d={`M${x - 5} 337.500h10M${x} 332.500v10`} />
          </g>
        ))}
        <path d="M546.500 345.500h16v36h-16zM550.500 348v32M549 346v35M550 357.500h12M550 369.500h12M601.500 345.500h16v36h-16zM614.500 347v33M602 357.500h12M602 369.500h12M574.500 352.500h15v20h-15zM576.500 354.500h11v16h-11z" />
      </g>
      <g stroke="#0f0">
        <path d="M574 306.500H599M576 307l4 4 4-4" />
      </g>
      <text x="589.500" y="305" textAnchor="middle" fontSize="6" fontWeight="700" fill="#0f0" fontFamily="Liberation Sans">6.000</text>
      {[[329, 225], [353, 225], [353, 236], [353, 295], [353, 406], [353, 418], [353, 443], [329, 443], [781, 199], [811, 199], [781, 225], [781, 258], [781, 282], [781, 325], [781, 347], [781, 418], [811, 426]].map(([x, y]) => (
        <TickDown key={`${x}-${y}`} x={x + 0.5} y={y + 0.5} />
      ))}
      {[[422, 479], [533, 479], [573, 479], [602, 479], [634, 479], [661, 479], [694, 479], [716, 479], [422, 491], [694, 491]].map(([x, y]) => (
        <Tick key={`${x}-${y}`} x={x + 0.5} y={y + 0.5} />
      ))}
      <g fill="#fff" textAnchor="middle">
        <g fontFamily="Noto Sans" fontSize="10">
          {bottomDims.map(([t, x, y]) => (
            <text key={`${t}-${x}`} x={x} y={y}>{t}</text>
          ))}
        </g>
        <g fontFamily="Liberation Serif" fontSize="12" fontWeight="700">
          {sideDims.map(([t, x, y]) => (
            <text key={`${t}-${x}-${y}`} transform={`translate(${x + 4} ${y}) rotate(-90)`}>{t}</text>
          ))}
        </g>
        <g fontFamily="Noto Sans" fontSize="11">
          <text x="533" y="254">14</text>
          <text x="594" y="237">5</text>
          <text x="639" y="272">13</text>
          <text x="585" y="342">8</text>
        </g>
        <g fontFamily="Noto Sans CJK SC">
          <text x="594" y="319" fontSize="6">下</text>
          <text x="552" y="413" fontSize="6" fontWeight="700">平台</text>
          <text transform="translate(548 370) rotate(-90)" fontSize="6" fontWeight="700">沙发区</text>
        </g>
        <g fontFamily="Noto Sans CJK SC" fontSize="16" fontWeight="300">
          <text x="737" y="489">三</text>
          <text x="766" y="489">层</text>
          <text x="795" y="489">平</text>
          <text x="824" y="489">面</text>
        </g>
      </g>
      <path d="M829 182.500H840" stroke="#fff" strokeWidth="3" />
    </svg>
  );
}

function Workspace() {
  return (
    <main className="flex min-w-0 flex-1 flex-col">
      <div className="flex min-h-[332px] flex-1">
        <div className="flex min-w-0 flex-1 flex-col bg-black">
          <FloorPlan />
        </div>
        <div className="flex w-4 flex-col items-center bg-[#f0f0f0] pt-[158px] pb-1">
          <div className="h-[17px] w-[15px] bg-[#cdcdcd]" />
          <span className="mt-auto"><Chevron dir="down" /></span>
        </div>
      </div>
      <div className="flex h-[21px] bg-linear-to-r from-[#929292] via-[#b4b4b4] to-[#999]">
        <button type="button" className="relative ml-1.5 h-[18px] w-[54px] pb-0.5 text-xs leading-[14px] text-black">
          <svg viewBox="0 0 54 18" className="absolute inset-0 h-full w-full" aria-hidden="true">
            <path d="M0 0q3 1 4 7l3 8q1 2 3 2h34q2 0 3-2l5-15z" fill="#cbcbcb" stroke="#666" />
          </svg>
          <span className="relative">Model</span>
        </button>
        <div className="ml-auto flex items-start">
          <button type="button" aria-label="布局列表" className="mt-[3px] mr-2 flex h-[17px] w-[18px] items-center justify-center rounded-[3px] border border-[#5f5f5f] bg-linear-to-b from-[#bbb] to-[#888]">
            <svg width="9" height="6" viewBox="0 0 9 6" fill="none" aria-hidden="true">
              <path d="m1 1 3.500 3.500L8 1" stroke="#fff" strokeWidth="2" />
            </svg>
          </button>
          <div className="mr-4 flex h-[18px] w-[208px] items-center bg-[#f0f0f0] px-1">
            <Chevron dir="left" />
            <div className="ml-20 h-4 w-[17px] bg-[#cdcdcd]" />
            <span className="ml-auto"><Chevron dir="right" /></span>
          </div>
        </div>
      </div>
    </main>
  );
}

function CommandArea() {
  return (
    <section aria-label="命令行" className="bg-[#f0f0f0] pt-[5px]">
      <PanelHeader title="命令行" />
      <div className="flex h-[60px] border border-[#777] bg-white">
        <textarea readOnly aria-label="命令历史" className="flex-1 resize-none bg-white p-1 text-[13px] outline-none" />
        <div className="flex w-4 flex-col items-center justify-between bg-[#f0f0f0] py-[5px] opacity-50">
          <Chevron dir="up" />
          <Chevron dir="down" />
        </div>
      </div>
      <div className="flex h-[22px] border-b border-[#555] bg-[#bfc5d0]">
        <label htmlFor="command" className="w-[58px] pl-2 text-[13px] leading-[18px] text-black">命令行:</label>
        <input id="command" type="text" className="min-w-0 flex-1 border border-[#888] bg-white px-1 text-[13px] outline-none" />
      </div>
    </section>
  );
}

function StatusBar() {
  const cell = "border-l border-[#e0e0e0] h-full flex items-center shadow-[-1px_0_0_#808080]";
  return (
    <footer className="flex h-[19px] items-center bg-linear-to-b from-[#a2a2a2] via-[#b2b2b2] to-[#909090] text-[11px] whitespace-nowrap text-[#101020]">
      <span className="w-[237px] pl-1.5 text-xs text-black">示例.dxf</span>
      <span className={`${cell} w-[100px] pl-1`}>12/19</span>
      <button type="button" aria-label="对象捕捉" className={`${cell} w-5 justify-center`}>
        <Icon size={16}>
          <path d="M3 13V7q1-5 6-5" stroke="#d83a3a" strokeWidth="3" />
          <path d="M9 2q5 0 5 6v4" stroke="#3c78d8" strokeWidth="3" />
          <path d="m2 11 5 5 6-8" stroke="#159020" strokeWidth="3" />
          <path d="M14 14h3v3h-3z" fill="#c00" />
        </Icon>
      </button>
      <button type="button" aria-label="栅格" className={`${cell} w-5 justify-center`}>
        <svg width="16" height="16" viewBox="0 0 16 16" fill="none" aria-hidden="true">
          <path d="M1 2h15M1 6h15M1 10h15M1 14h15" stroke="#222" strokeWidth="1" strokeDasharray="1 3" shapeRendering="crispEdges" />
        </svg>
      </button>
      <button type="button" aria-label="正交" className={`${cell} w-5 justify-center`}>
        <svg width="16" height="16" viewBox="0 0 16 16" fill="none" aria-hidden="true">
          <path d="M2 12.500h12M8.500 2v10" stroke={BLUE} />
        </svg>
      </button>
      <button type="button" aria-label="极轴" className={`${cell} w-5 justify-center`}>
        <Icon size={16}>
          <circle cx="7" cy="9" r="5" fill="#d8ecff" stroke="#245fb8" />
          <path d="M7 10 16 1M8 10h9" stroke="#222" />
          <path d="m2 11 4 5 7-8" stroke="#159020" strokeWidth="3" />
        </Icon>
      </button>
      <span className={`${cell} min-w-0 flex-1 pl-1`}>(57667.33; 27171.56; 0)</span>
      <span className={`${cell} w-[120px]`} />
      <span className={`${cell} w-[105px] pl-1`}>84100 x 59400 x 0</span>
    </footer>
  );
}

export default function App() {
  return (
    <div className="flex min-h-screen flex-col bg-[#060606] pb-[3px] font-['Noto_Sans','Noto_Sans_CJK_SC',sans-serif]">
      <TitleBar />
      <div className="mr-1 ml-[3px] flex flex-1 flex-col">
        <MenuBar />
        <Ribbon />
        <div className="relative flex flex-1 flex-col">
          <div className="flex h-[27px] items-end bg-linear-to-r from-[#929292] to-[#bcbcbc] pl-1">
            <div className="flex h-[22px] items-center rounded-t-[3px] border-x-2 border-t border-[#7b7b7b] bg-[#c9c9c9] pr-1 pl-[5px] text-xs text-black">
              示例.dxf
              <button type="button" aria-label="关闭文件" className="ml-2 flex size-[17px] items-center justify-center rounded-[3px] border border-[#666] bg-[#929292]">
                <svg width="9" height="9" viewBox="0 0 9 9" fill="none" aria-hidden="true">
                  <path d="m1 1 7 7M8 1 1 8" stroke="#fffbe0" strokeWidth="2" />
                </svg>
              </button>
            </div>
          </div>
          <div className="flex flex-1">
            <SidePanels />
            <Workspace />
          </div>
          <EditMenu />
        </div>
        <CommandArea />
        <StatusBar />
      </div>
    </div>
  );
}
